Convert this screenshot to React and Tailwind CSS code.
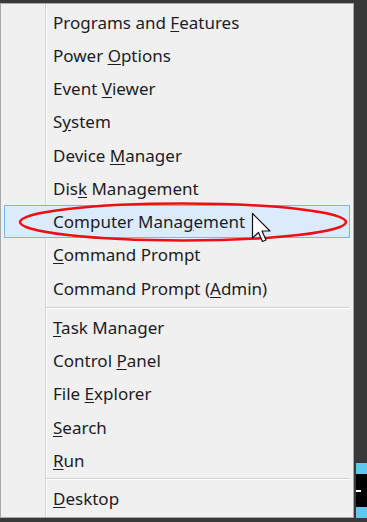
const groups = [
  [
    ['Programs and ', 'F', 'eatures'],
    ['Power ', 'O', 'ptions'],
    ['Event ', 'V', 'iewer'],
    ['S', 'y', 'stem'],
    ['Device ', 'M', 'anager'],
    ['Dis', 'k', ' Management'],
    ['Computer Mana', 'g', 'ement', true],
    ['', 'C', 'ommand Prompt'],
    ['Command Prompt (', 'A', 'dmin)'],
  ],
  [
    ['', 'T', 'ask Manager'],
    ['Control ', 'P', 'anel'],
    ['File ', 'E', 'xplorer'],
    ['', 'S', 'earch'],
    ['', 'R', 'un'],
  ],
  [['', 'D', 'esktop']],
];

const Item = ({ item }) => {
  const [pre, key, post, active] = item;
  return (
    <div
      className={
        'h-[33.25px] mx-[3px] flex items-center ' +
        (active ? 'pl-[48px] border border-[#7eb4ea] bg-[#dcebfc]' : 'pl-[49px]')
      }
    >
      <span className="text-[17px] leading-none text-[#1c1c26] whitespace-nowrap">
        {pre}
        <span className="underline underline-offset-[2px]">{key}</span>
        {post}
      </span>
    </div>
  );
};

const Separator = ({ h }) => (
  <div className={'flex flex-col justify-center ml-[45px] mr-[3px] ' + h}>
    <div className="h-px bg-[#d2d2d2]" />
    <div className="h-px bg-white" />
  </div>
);

const App = () => {
  return (
    <div
      className="w-[367px] h-[522px] bg-[#393939] relative overflow-hidden pt-[3px]"
      style={{ fontFamily: '"Noto Sans", "Open Sans", sans-serif' }}
    >
      <div className="w-[354px] h-[515px] border border-[#a8a8a8] pt-[1.4px] bg-[#f0f0f0] bg-[linear-gradient(to_right,#f0f0f0_44px,#d4d4d4_44px,#d4d4d4_45px,#fbfbfb_45px,#fbfbfb_46px,#f0f0f0_46px)]">
        {groups[0].map((it) => (
          <Item key={it.join('')} item={it} />
        ))}
        <Separator h="h-[6px]" />
        {groups[1].map((it) => (
          <Item key={it.join('')} item={it} />
        ))}
        <Separator h="h-[5px]" />
        {groups[2].map((it) => (
          <Item key={it.join('')} item={it} />
        ))}
      </div>

      {/* bit of taskbar tile peeking out on the right */}
      <div className="absolute left-[356px] top-[463px] w-[11px] h-[55px] flex flex-col">
        <div className="h-[11px] bg-[#5ec8ee]" />
        <div className="flex-1 bg-black flex items-center">
          <div className="w-[5px] h-[2px] bg-white" />
        </div>
        <div className="h-[11px] bg-[#5ec8ee]" />
      </div>

      {/* red annotation ellipse + cursor */}
      <svg className="absolute left-0 top-0 pointer-events-none" width="367" height="522">
        <ellipse cx="183" cy="222" rx="163" ry="18.5" fill="none" stroke="#ee1010" strokeWidth="2.5" />
        <path
          d="M252.5 213.5 L252.5 238 L258.5 232.5 L262.5 241.5 L266 240 L262 231 L270 231 Z"
          fill="#fff"
          stroke="#111"
          strokeWidth="1.2"
          strokeLinejoin="round"
        />
      </svg>
    </div>
  );
};

export default App;
